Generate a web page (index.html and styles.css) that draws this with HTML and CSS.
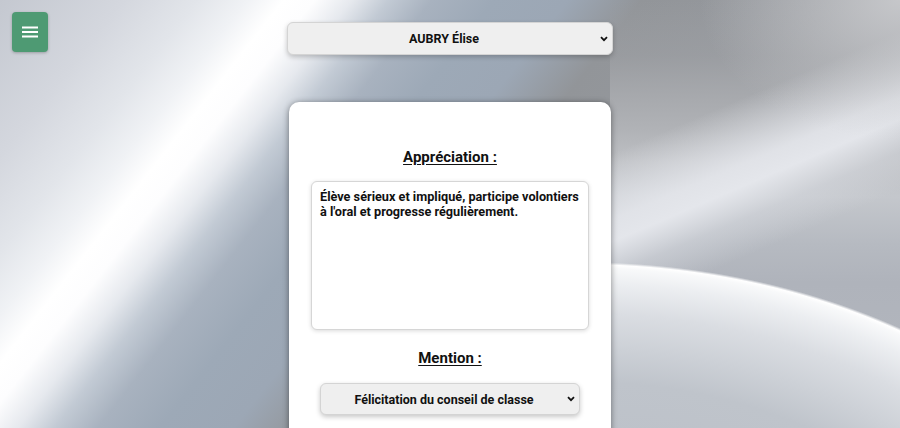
FILE: index.html
```html
<!DOCTYPE html>
<html lang="fr">
<head>
<meta charset="utf-8">
<title>Appréciation</title>
<link rel="stylesheet" href="styles.css">
</head>
<body>
<button class="menu-btn" type="button" aria-label="Menu">
  <svg width="16" height="12" viewBox="0 0 16 12"><path d="M0 1.5H16M0 6H16M0 10.5H16" stroke="#fff" stroke-width="2"/></svg>
</button>
<header class="top">
  <div class="select-wrap select-wide">
    <select class="pick">
      <option>AUBRY Élise</option>
    </select>
    <svg class="chev" width="8" height="6" viewBox="0 0 8 6"><path d="M1 1.2L4 4.2L7 1.2" fill="none" stroke="#111" stroke-width="1.8"/></svg>
  </div>
</header>
<main class="card">
  <h2 class="label">Appréciation :</h2>
  <textarea class="appre">Élève sérieux et impliqué, participe volontiers à l'oral et progresse régulièrement.</textarea>
  <h2 class="label label-mention">Mention :</h2>
  <div class="select-wrap select-narrow">
    <select class="pick">
      <option>Félicitation du conseil de classe</option>
    </select>
    <svg class="chev" width="8" height="6" viewBox="0 0 8 6"><path d="M1 1.2L4 4.2L7 1.2" fill="none" stroke="#111" stroke-width="1.8"/></svg>
  </div>
</main>
</body>
</html>
```
FILE: styles.css
```css
html, body {
  margin: 0;
  height: 100%;
  overflow: hidden;
}
body {
  font-family: Roboto, "Liberation Sans", sans-serif;
  color: #111;
  background-color: #c4c8cf;
  background-repeat: no-repeat;
  background-image:
    radial-gradient(600px 428px at -30px 690px, #b3b8c1 0%, #bfc4cb 72%, #dadde2 88%, #eceef1 95%, #f8f9fa 98.6%, #ffffff 99.4%, rgba(255,255,255,0) 100%),
    radial-gradient(200px 140px at 100% 0%, rgba(200,201,204,0.95) 0%, rgba(200,201,204,0) 100%),
    linear-gradient(157deg, rgba(228,231,236,0) 28%, rgba(228,230,235,0.9) 40%, rgba(230,232,237,0.95) 44%, rgba(215,218,224,0.5) 50%, rgba(200,204,211,0) 57%),
    linear-gradient(180deg, rgba(150,152,156,0) 0%, rgba(160,162,166,0.5) 13%, rgba(168,170,174,0.9) 22%, #b0b2b6 30%, #bec0c4 38%, #c4c7cc 46%, #b6bac1 57%, #afb3bb 66%, #b5b9c0 100%),
    linear-gradient(128deg, #c4c8d0 0%, #d4d7de 10%, #e2e5ea 16%, #f0f2f5 20%, #ffffff 23%, #fdfdfe 25.5%, #e6e9ee 28.5%, #c2cad4 31.5%, #a8b2bf 35%, #9da9b7 40%, #9ca7b5 46%, #929599 52%, #95989d 62%, #aaadb2 100%);
  background-size: 290px 100%, 290px 100%, 290px 100%, 290px 100%, 100% 100%;
  background-position: right top, right top, right top, right top, left top;
}
.menu-btn {
  position: fixed;
  top: 12px;
  left: 12px;
  width: 36px;
  height: 40px;
  border: 0;
  border-radius: 4px;
  background: #4e9a73;
  box-shadow: 0 1px 3px rgba(0,0,0,0.25);
  display: flex;
  align-items: center;
  justify-content: center;
  padding: 0;
}
.top {
  display: flex;
  justify-content: center;
  padding-top: 22px;
}
.select-wrap {
  position: relative;
}
.select-wide {
  width: 326px;
}
.select-narrow {
  width: 260px;
  margin: 0 auto;
}
.pick {
  -webkit-appearance: none;
  appearance: none;
  width: 100%;
  height: 33px;
  margin: 0;
  padding: 0 22px 0 10px;
  border: 1px solid #d4d4d4;
  border-radius: 6px;
  background: #efefef;
  font-family: Roboto, "Liberation Sans", sans-serif;
  font-size: 12.5px;
  font-weight: 700;
  color: #111;
  text-align: center;
  text-align-last: center;
  box-shadow: 0 2px 5px rgba(0,0,0,0.22);
}
.select-narrow .pick {
  height: 32px;
}
.chev {
  position: absolute;
  right: 5px;
  top: 50%;
  margin-top: -3px;
  pointer-events: none;
}
.card {
  width: 322px;
  margin: 47px auto 0;
  box-sizing: border-box;
  background: #fff;
  border-radius: 10px;
  padding: 46px 22px 60px;
  box-shadow: 0 1px 6px rgba(0,0,0,0.45);
  display: flex;
  flex-direction: column;
}
.label {
  margin: 0;
  font-size: 15px;
  line-height: 18px;
  font-weight: 700;
  text-align: center;
  text-decoration: underline;
  text-underline-offset: 2px;
  color: #111;
}
.appre {
  margin: 15px 0 0;
  height: 149px;
  box-sizing: border-box;
  width: 100%;
  resize: none;
  border: 1px solid #d6d6d6;
  border-radius: 6px;
  padding: 7px 8px;
  font-family: Roboto, "Liberation Sans", sans-serif;
  font-size: 12.7px;
  font-weight: 700;
  line-height: 15px;
  color: #111;
  box-shadow: 0 1px 4px rgba(0,0,0,0.15);
}
.label-mention {
  margin-top: 19px;
  margin-bottom: 16px;
}
```
